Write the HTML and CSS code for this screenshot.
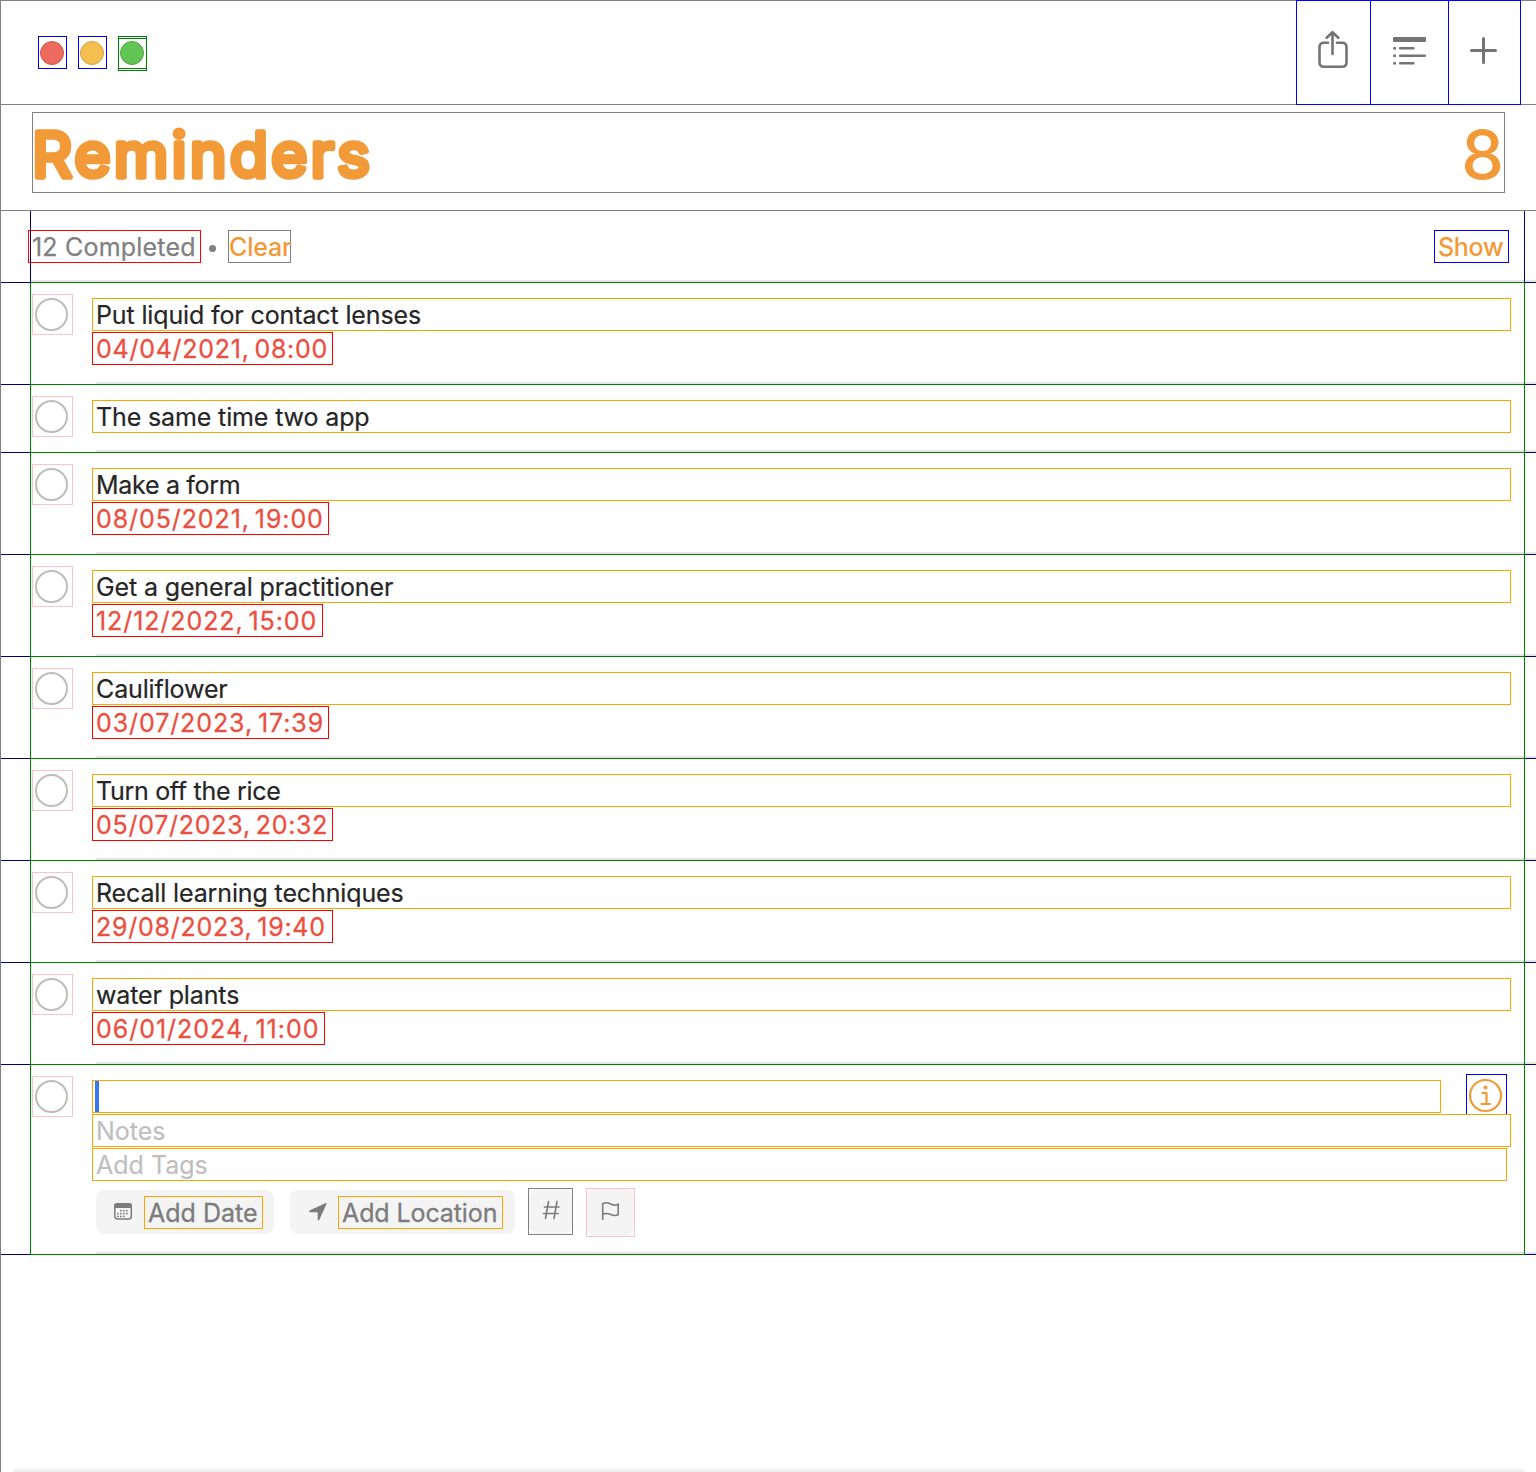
FILE: index.html
```html
<!DOCTYPE html>
<html lang="en">
<head>
<meta charset="utf-8">
<title>Reminders</title>
<link rel="stylesheet" href="styles.css">
</head>
<body>
<main class="window">
  <header class="toolbar">
    <div class="lights">
      <span class="light-box"><i class="light red"></i></span>
      <span class="light-box"><i class="light yellow"></i></span>
      <span class="light-box zoom-box"><span class="zoom-inner"><i class="light green"></i></span></span>
    </div>
    <div class="tools">
      <button class="tool share" aria-label="Share"><svg width="73" height="103" viewBox="1297 1 73 103"><path d="M1328 42.700h-4q-4.500 0-4.500 4.500v15q0 4.500 4.500 4.500h18q4.500 0 4.500-4.500v-15q0-4.500-4.500-4.500h-5M1332.500 54V32.500M1326.700 37.800l5.800-5.600 5.800 5.600"/></svg></button>
      <button class="tool view" aria-label="View options"><svg width="77" height="103" viewBox="1371 1 77 103"><path class="fill" d="M1394 37h31q1 0 1 1v3q0 1-1 1h-31q-1 0-1-1v-3q0-1 1-1z"/><path d="M1400.200 48.300h13.200M1400.200 55.700h24.600M1400.200 63.300h13.200"/><path class="bullets" d="M1394.600 48.300h.1M1394.600 55.700h.1M1394.600 63.300h.1"/></svg></button>
      <button class="tool add" aria-label="Add reminder"><svg width="71" height="103" viewBox="1449 1 71 103"><path class="plus" d="M1471.500 50.500h24M1483.500 38.500v24"/></svg></button>
    </div>
  </header>
  <section class="heading">
    <div class="heading-box">
      <svg class="title" width="345" height="79" viewBox="33 113 345 79"><text x="32" y="176.500" textLength="338">Reminders</text></svg>
      <span class="count">8</span>
    </div>
  </section>
  <section class="completed">
    <span class="gutter"></span>
    <div class="completed-body">
      <span class="done-count">12 Completed</span><span class="dot"></span><span class="clear">Clear</span>
      <span class="show">Show</span>
    </div>
    <span class="gutter end"></span>
  </section>
  <section class="list">
    <article class="row"><div class="cell"><span class="check"><i></i></span><div class="content"><div class="field">Put liquid for contact lenses</div><time class="date">04/04/2021, 08:00</time></div></div></article>
    <article class="row"><div class="cell"><span class="check"><i></i></span><div class="content"><div class="field">The same time two app</div></div></div></article>
    <article class="row"><div class="cell"><span class="check"><i></i></span><div class="content"><div class="field tight">Make a form</div><time class="date w-mid">08/05/2021, 19:00</time></div></div></article>
    <article class="row"><div class="cell"><span class="check"><i></i></span><div class="content"><div class="field">Get a general practitioner</div><time class="date w-narrow">12/12/2022, 15:00</time></div></div></article>
    <article class="row"><div class="cell"><span class="check"><i></i></span><div class="content"><div class="field">Cauliflower</div><time class="date w-mid">03/07/2023, 17:39</time></div></div></article>
    <article class="row"><div class="cell"><span class="check"><i></i></span><div class="content"><div class="field tight">Turn off the rice</div><time class="date">05/07/2023, 20:32</time></div></div></article>
    <article class="row"><div class="cell"><span class="check"><i></i></span><div class="content"><div class="field">Recall learning techniques</div><time class="date">29/08/2023, 19:40</time></div></div></article>
    <article class="row"><div class="cell"><span class="check"><i></i></span><div class="content"><div class="field">water plants</div><time class="date w-small">06/01/2024, 11:00</time></div></div></article>
    <article class="row">
      <div class="cell">
        <span class="check"><i></i></span>
        <div class="content editor">
          <div class="title-line">
            <div class="field title-field"><i class="caret"></i></div>
            <span class="info"><svg width="39" height="39" viewBox="1467 1075 39 39"><circle cx="1485.500" cy="1095.500" r="15.500"/><path d="M1482.500 1093h4v11M1481.500 1104h8.500"/><circle class="fill" cx="1485.500" cy="1087.500" r="2"/></svg></span>
          </div>
          <div class="field hint">Notes</div>
          <div class="field hint tags">Add Tags</div>
          <div class="actions">
            <button class="pill date-pill"><svg width="20" height="20" viewBox="0 0 20 20"><rect x="1.800" y="2" width="16.500" height="15" rx="2.500"/><path class="fill" d="M1 6V4q0-3 3-3h12q3 0 3 3v2z"/><path class="dots" d="M7.800 8.700h9M4.800 11.600h12M4.800 14.400h9"/></svg><span class="pill-label">Add Date</span></button>
            <button class="pill loc-pill"><svg width="20" height="20" viewBox="0 0 20 20"><path class="fill" d="M1.600 8.600 17.300 1.200q1.700-.6 1.100 1.100L11.200 17.900q-1 1.500-1.500-.4V10.300H2.300q-2.200-.3-.7-1.700z"/></svg><span class="pill-label">Add Location</span></button>
            <button class="square hash" aria-label="Tag"><svg width="43" height="45" viewBox="529 1189 43 45"><path d="M548.500 1201.500l-3 17M557 1201.500l-3 17M544.500 1207h14.500M543.500 1213.500h14.500"/></svg></button>
            <button class="square flag" aria-label="Flag"><svg width="47" height="47" viewBox="587 1189 47 47"><path d="M602.700 1219.500v-16M602.700 1204q3-2.500 8 0t7.500 0v10.500q-3 2-7.500 0t-8 0"/></svg></button>
          </div>
        </div>
      </div>
    </article>
  </section>
  <footer class="bottom-edge"></footer>
</main>
</body>
</html>
```

FILE: styles.css
```css
* { box-sizing: border-box; }
body { margin: 0; background: #fff; font-family: Inter, "Liberation Sans", sans-serif; }
button { margin: 0; padding: 0; border: 0; background: none; font: inherit; color: inherit; }
svg { display: block; flex: none; fill: none; stroke-linecap: round; stroke-linejoin: round; }
.window {
  display: flex; flex-direction: column;
  width: 1536px; height: 1472px; overflow: hidden;
  border-left: 1px solid #808080;
}

.toolbar { display: flex; justify-content: space-between; height: 105px; flex: none; border: solid #808080; border-width: 1px 0; }
.lights { display: flex; align-items: flex-start; gap: 11px; padding: 35px 0 0 37px; }
.light-box { width: 29px; height: 33px; padding: 4px 1px; border: 1px solid #00f; }
.light { display: block; width: 24px; height: 24px; border-radius: 50%; border: 1px solid; }
.red { background: #ec6a5e; border-color: #d3554a; }
.yellow { background: #f4bf4f; border-color: #d9a23f; }
.green { background: #61c554; border-color: #4fa73f; }
.zoom-box { height: 35px; padding: 1px 0; border-color: #008000; }
.zoom-inner { display: block; height: 31px; padding: 2px 1px; border: solid #008000; border-width: 1px 0; }
.tools { display: flex; height: 105px; margin: -1px 15px 0 0; }
.tool { display: block; border: 1px solid #00f; border-left-width: 0; }
.tool:first-child { border-left-width: 1px; }
.tool svg { stroke: #747474; stroke-width: 2.6; }
.tool .bullets { stroke-width: 3; }
.tool .plus { stroke-width: 3; }
.fill { fill: #747474; stroke: none; }

.heading { height: 106px; flex: none; padding: 7px 31px 0; border-bottom: 1px solid #808080; }
.heading-box { display: flex; justify-content: space-between; height: 81px; border: 1px solid #808080; }
.title text { font-size: 62.5px; fill: #f29a38; stroke: #f29a38; stroke-width: 5.4px; }
.count { font-size: 68px; line-height: 82px; font-weight: 500; color: #f29a38; }

.completed { display: flex; height: 72px; flex: none; font-size: 25px; line-height: 33px; }
.gutter { width: 30px; border: solid #000080; border-width: 0 1px 1px 0; }
.gutter.end { width: 12px; border-width: 0 0 1px 1px; box-shadow: inset 0 -2px #e5e5e5; }
.completed-body { flex: 1; display: flex; align-items: flex-start; padding: 19px 15px 0 0; border-bottom: 1px solid #008000; box-shadow: inset 0 -2px #e5e5e5; white-space: nowrap; }
.done-count { width: 173px; height: 33px; margin-left: -3px; padding-left: 3px; border: 1px solid #f00; color: #808080; letter-spacing: .2px; -webkit-text-stroke: .25px; }
.dot { width: 7px; height: 7px; margin: 15px 12px 0 8px; border-radius: 50%; background: #808080; }
.clear { width: 63px; height: 33px; border: 1px solid #808080; color: #f29a38; font-weight: 500; letter-spacing: -.2px; }
.show { width: 75px; height: 33px; margin-left: auto; padding-left: 3px; border: 1px solid #00f; color: #f29a38; font-weight: 500; letter-spacing: -.3px; }

.row { display: flex; }
.row::before, .row::after { content: ""; width: 29px; border-bottom: 1px solid #000080; }
.row::after { width: 11px; box-shadow: inset 0 -2px #e5e5e5; }
.cell { flex: 1; display: flex; align-items: flex-start; padding: 11px 0 0 1px; border: solid #008000; border-width: 0 1px 1px; }
.check { width: 41px; height: 41px; padding: 3px 2px; border: 1px solid #ffc0cb; }
.check i { display: block; width: 33px; height: 33px; border: 2px solid #bdbdbd; border-radius: 50%; }
.content { flex: 1; margin-left: 19px; padding: 4px 13px 19px 0; font-size: 25px; line-height: 33px; white-space: nowrap; background: linear-gradient(#e5e5e5, #e5e5e5) 4px 100% / 100% 2px no-repeat; }
.field { height: 33px; padding-left: 3px; border: 1px solid #ffa500; color: #262626; letter-spacing: -.13px; -webkit-text-stroke: .2px; }
.field.tight { letter-spacing: -.3px; }
.date { display: block; width: 241px; height: 33px; margin-top: 1px; padding-left: 3px; border: 1px solid #f00; color: #eb4f3f; letter-spacing: .74px; word-spacing: -3px; -webkit-text-stroke: .3px; }
.w-mid { width: 237px; letter-spacing: .91px; }
.w-narrow { width: 231px; letter-spacing: .91px; }
.w-small { width: 233px; letter-spacing: .98px; }

.editor { display: flex; flex-direction: column; gap: 1px; padding-bottom: 17px; }
.title-line { display: flex; justify-content: space-between; height: 33px; }
.title-field { width: 1349px; padding-left: 2px; }
.caret { display: block; width: 4px; height: 31px; background: #3478f6; }
.info { width: 41px; height: 40px; margin: -6px 4px 0 0; border: solid #00f; border-width: 1px 1px 0; }
.info svg { stroke: #f29a38; stroke-width: 2.2; }
.info .fill { fill: #f29a38; }
.hint { color: #bfbfbf; letter-spacing: 0; }
.tags { margin-right: 4px; }
.actions { display: flex; align-items: flex-start; margin: 6px 0 0 4px; color: #7c7c7c; }
.pill { display: flex; align-items: flex-start; height: 44px; margin-top: 2px; padding-top: 6px; border-radius: 8px; background: #f4f4f4; }
.pill svg { margin-top: 6px; stroke: #7c7c7c; stroke-width: 1.5; }
.pill .fill { fill: #7c7c7c; stroke: none; }
.pill .dots { stroke-width: 1.7; stroke-dasharray: .1 2.9; }
.date-pill { width: 178px; padding-left: 17px; }
.loc-pill { width: 225px; margin-left: 16px; padding-left: 18px; }
.pill-label { width: 119px; height: 33px; margin-left: 11px; padding-left: 3px; border: 1px solid #ffa500; text-align: left; letter-spacing: 0; -webkit-text-stroke: .3px; }
.loc-pill .pill-label { width: 165px; margin-left: 10px; letter-spacing: -.1px; }
.square { background: #fff; }
.square svg { border-radius: 8px; background: #f4f4f4; stroke: #7c7c7c; stroke-width: 1.6; }
.hash { margin-left: 13px; border: 1px solid #808080; }
.flag { margin-left: 13px; border: 1px solid #ffc0cb; }

.bottom-edge { height: 5px; flex: none; margin: auto 12px 0; border-radius: 12px 12px 0 0; background: linear-gradient(#fff, #ebebeb); }
```
